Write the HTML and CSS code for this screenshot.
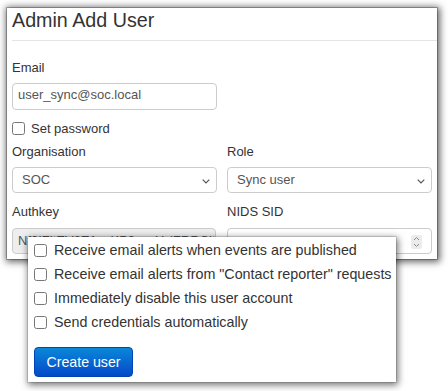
FILE: index.html
```html
<!DOCTYPE html>
<html>
<head>
<meta charset="utf-8">
<link rel="stylesheet" href="styles.css">
</head>
<body>
<div class="window">
  <h1 class="title">Admin Add User</h1>
  <hr class="rule">
  <div class="label label-email">Email</div>
  <div class="field field-email">user_sync@soc.local</div>
  <label class="check-row"><input type="checkbox" class="check"><span>Set password</span></label>
  <div class="grid">
    <div class="col">
      <div class="label">Organisation</div>
      <div class="select">SOC<svg class="chev" width="8" height="5" viewBox="0 0 8 5"><path d="M0.7 0.7 L4 4 L7.3 0.7" fill="none" stroke="#555" stroke-width="1.2"/></svg></div>
    </div>
    <div class="col">
      <div class="label">Role</div>
      <div class="select">Sync user<svg class="chev" width="8" height="5" viewBox="0 0 8 5"><path d="M0.7 0.7 L4 4 L7.3 0.7" fill="none" stroke="#555" stroke-width="1.2"/></svg></div>
    </div>
    <div class="col">
      <div class="label">Authkey</div>
      <div class="field field-disabled">Nf0IZltEV6E1ozKP9uvsYoiZRRClt</div>
    </div>
    <div class="col">
      <div class="label">NIDS SID</div>
      <div class="field field-number"><span class="spinner"><svg width="11" height="14" viewBox="0 0 11 14"><path d="M3 5 L5.5 2.5 L8 5" fill="none" stroke="#8a8a8a" stroke-width="1"/><path d="M3 9 L5.5 11.5 L8 9" fill="none" stroke="#8a8a8a" stroke-width="1"/></svg></span></div>
    </div>
  </div>
</div>
<div class="popup">
  <label class="pop-row"><input type="checkbox" class="check"><span>Receive email alerts when events are published</span></label>
  <label class="pop-row"><input type="checkbox" class="check"><span>Receive email alerts from "Contact reporter" requests</span></label>
  <label class="pop-row"><input type="checkbox" class="check"><span>Immediately disable this user account</span></label>
  <label class="pop-row"><input type="checkbox" class="check"><span>Send credentials automatically</span></label>
  <button class="btn-primary">Create user</button>
</div>
</body>
</html>
```
FILE: styles.css
```css
html, body {
  margin: 0;
  padding: 0;
  background: #fff;
}
body {
  font-family: "Liberation Sans", Arial, sans-serif;
  color: #333;
  position: relative;
  width: 448px;
  height: 391px;
  overflow: hidden;
}
.window {
  margin: 8px 0 0 7px;
  width: 430px;
  height: 251px;
  box-sizing: border-box;
  padding: 0 5px;
  background: #fff;
  overflow: hidden;
  box-shadow: 0 0 0 1px rgba(0,0,0,.25), 1px 1px 7px 2px rgba(0,0,0,.6);
}
.title {
  margin: 0;
  font-size: 19.7px;
  line-height: 24.5px;
  font-weight: normal;
  color: #333;
}
.rule {
  margin: 7.5px -5px 0 0;
  border: 0;
  border-top: 1px solid #e5e5e5;
  height: 0;
}
.label {
  font-size: 13px;
  line-height: 18px;
  margin-bottom: 6.5px;
  color: #333;
}
.label-email {
  margin-top: 17.5px;
}
.field {
  position: relative;
  box-sizing: border-box;
  width: 205px;
  height: 26px;
  border: 1px solid #ccc;
  border-radius: 4px;
  font-size: 13px;
  line-height: 18px;
  padding: 3px 5px 0;
  color: #555;
  white-space: nowrap;
  overflow: hidden;
  background: #fff;
}
.field-email {
  height: 27px;
  padding-top: 2px;
}
.field-disabled {
  background: #eee;
  width: 204px;
}
.spinner {
  position: absolute;
  right: 9px;
  top: 6px;
  width: 11px;
  height: 14px;
  background: #ececec;
  border-radius: 2px;
  display: block;
}
.spinner svg {
  display: block;
}
.check-row {
  display: flex;
  align-items: center;
  gap: 6px;
  margin-top: 9.5px;
  font-size: 13px;
  line-height: 18px;
}
.check {
  margin: 0;
  width: 13px;
  height: 13px;
  flex: none;
}
.grid {
  display: grid;
  grid-template-columns: 205px 205px;
  column-gap: 10px;
  row-gap: 10px;
  margin-top: 5px;
}
.select {
  position: relative;
  box-sizing: border-box;
  height: 26px;
  border: 1px solid #ccc;
  border-radius: 4px;
  font-size: 13px;
  line-height: 24px;
  padding: 0 9px;
  color: #555;
  background: #fff;
}
.chev {
  position: absolute;
  right: 6px;
  top: 11px;
}
.popup {
  position: absolute;
  left: 28px;
  top: 237px;
  width: 368px;
  height: 145px;
  box-sizing: border-box;
  padding: 1px 0 5px 6px;
  background: #fff;
  box-shadow: 0 0 0 1px rgba(0,0,0,.12), 1px 2px 7px 1px rgba(0,0,0,.55);
}
.pop-row {
  display: flex;
  align-items: center;
  gap: 7px;
  font-size: 14.3px;
  line-height: 24px;
  color: #333;
  white-space: nowrap;
}
.btn-primary {
  display: block;
  margin-top: 13px;
  width: 99px;
  height: 30px;
  border: 1px solid #0045b8;
  border-radius: 4px;
  background: linear-gradient(#0a88d8, #0448c8);
  color: #fff;
  font-family: "Liberation Sans", Arial, sans-serif;
  font-size: 14.2px;
  padding: 0;
}
```
